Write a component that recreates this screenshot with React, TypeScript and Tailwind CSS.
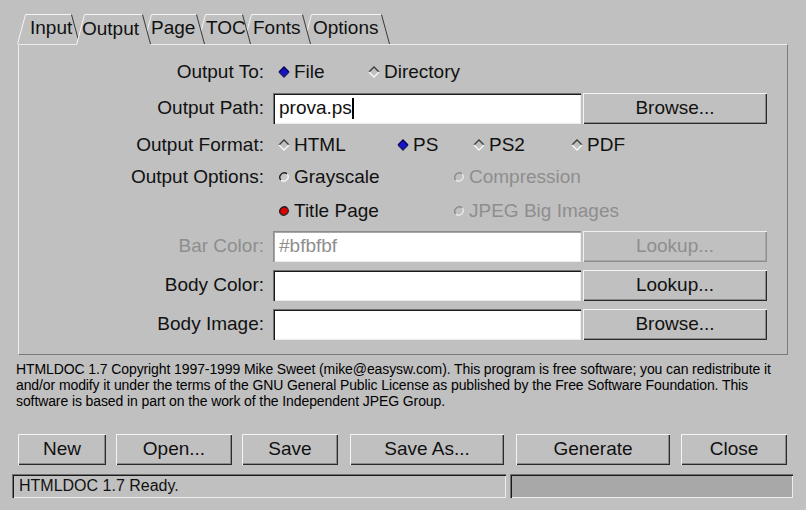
import React from "react";

const upBox =
  "shadow-[inset_1px_1px_0_#f4f4f4,inset_-1px_-1px_0_#2a2a2a,inset_-2px_-2px_0_#8a8a8a]";
const upBoxOff =
  "shadow-[inset_1px_1px_0_#f0f0f0,inset_-1px_-1px_0_#8c8c8c,inset_-2px_-2px_0_#a8a8a8]";
const downBox =
  "shadow-[inset_1px_1px_0_#707070,inset_2px_2px_0_#1a1a1a,inset_-1px_-1px_0_#ececec]";
const downBoxOff =
  "shadow-[inset_1px_1px_0_#8c8c8c,inset_2px_2px_0_#a8a8a8,inset_-1px_-1px_0_#ececec]";

type TabProps = {
  label: string;
  w: number;
  cls: string;
  selected?: boolean;
};

const Tab = ({ label, w, cls, selected }: TabProps) => {
  const h = selected ? 31 : 30;
  const s = 8;
  return (
    <div className={`relative flex items-center ${cls} ${selected ? "h-[31px]" : "h-[30px]"}`}>
      <svg className="absolute inset-0" width={w} height={h} viewBox={`0 0 ${w} ${h}`}>
        <polygon points={`0,${h} ${s},0 ${w - s},0 ${w},${h}`} fill="#c0c0c0" />
        <polyline
          points={`0.5,${h} ${s + 0.5},0.5 ${w - s - 0.5},0.5`}
          fill="none"
          stroke="#f4f4f4"
          strokeWidth="1"
        />
        <line x1={w - s - 0.5} y1={0.5} x2={w - 0.5} y2={selected ? 30 : h} stroke="#3a3a3a" strokeWidth="1" />
      </svg>
      <span className="relative pb-[1px]">{label}</span>
    </div>
  );
};

const Diamond = ({ on }: { on?: boolean }) => (
  <svg width="12" height="12" viewBox="0 0 12 12" className="shrink-0">
    <polygon points="6,1 11,6 6,11 1,6" fill={on ? "#1414c8" : "#c0c0c0"} />
    <polyline points="1,6 6,1 11,6" fill="none" stroke={on ? "#000050" : "#3a3a3a"} strokeWidth="1.3" />
    <polyline points="1,6 6,11 11,6" fill="none" stroke={on ? "#202060" : "#f8f8f8"} strokeWidth="1.3" />
  </svg>
);

const Round = ({ on, off }: { on?: boolean; off?: boolean }) => (
  <svg width="12" height="12" viewBox="0 0 12 12" className="shrink-0">
    <circle cx="6" cy="6" r="4.3" fill={on ? "#e00000" : off ? "#c0c0c0" : "#c8c8c8"} />
    <path d="M2.9 9.1 A4.4 4.4 0 0 1 9.1 2.9" fill="none" stroke={off ? "#8c8c8c" : "#202020"} strokeWidth="1.4" />
    <path d="M9.1 2.9 A4.4 4.4 0 0 1 2.9 9.1" fill="none" stroke={on ? "#303030" : off ? "#e8e8e8" : "#f4f4f4"} strokeWidth="1.4" />
  </svg>
);

const Radio = ({
  label,
  kind,
  on,
  off,
  cls,
}: {
  label: string;
  kind: "d" | "r";
  on?: boolean;
  off?: boolean;
  cls?: string;
}) => (
  <div className={`flex items-center gap-[4px] ${cls ?? ""} ${off ? "text-[#8e8e8e]" : ""}`}>
    {kind === "d" ? <Diamond on={on} /> : <Round on={on} off={off} />}
    <span>{label}</span>
  </div>
);

const Label = ({ text, off }: { text?: string; off?: boolean }) => (
  <div className={`w-[246px] shrink-0 text-right pr-[1px] ${off ? "text-[#8e8e8e]" : ""}`}>{text}</div>
);

const Field = ({ value, cursor, off }: { value?: string; cursor?: boolean; off?: boolean }) => (
  <div
    className={`w-[308px] h-[31px] bg-white flex items-center pl-[6px] ${off ? `${downBoxOff} text-[#8e8e8e]` : downBox}`}
  >
    <span>{value}</span>
    {cursor && <span className="w-[2px] h-[21px] bg-black" />}
  </div>
);

const Btn = ({ label, cls, off }: { label: string; cls: string; off?: boolean }) => (
  <div
    className={`h-[31px] flex items-center justify-center ${cls} ${off ? `${upBoxOff} text-[#8e8e8e]` : upBox}`}
  >
    {label}
  </div>
);

export default function App() {
  return (
    <div className="w-[806px] h-[510px] bg-[#c0c0c0] text-[#111] font-['Liberation_Sans',Arial,sans-serif] text-[19px] overflow-hidden">
      {/* tabs */}
      <div className="relative z-10 flex items-start h-[31px] mt-[14px] pl-[17px]">
        <Tab label="Input" w={63} cls="w-[63px] z-[1] pl-[13px]" />
        <Tab label="Output" w={75} cls="w-[75px] -ml-[4px] z-[10] pl-[6px]" selected />
        <Tab label="Page" w={62} cls="w-[62px] -ml-[8px] z-[6] pl-[8px]" />
        <Tab label="TOC" w={54} cls="w-[54px] -ml-[8px] z-[5] pl-[9px]" />
        <Tab label="Fonts" w={68} cls="w-[68px] -ml-[8px] z-[4] pl-[10px]" />
        <Tab label="Options" w={87} cls="w-[87px] -ml-[8px] z-[3] pl-[10px]" />
      </div>

      {/* panel */}
      <div className="-mt-[1px] ml-[18px] w-[770px] h-[311px] border border-t-[#ececec] border-l-[#ececec] border-r-[#7a7a7a] border-b-[#7a7a7a] pt-[12px] flex flex-col">
        <div className="flex items-center h-[30px]">
          <Label text="Output To:" />
          <div className="flex ml-[13px]">
            <Radio kind="d" label="File" on cls="w-[90px]" />
            <Radio kind="d" label="Directory" />
          </div>
        </div>
        <div className="flex items-center h-[31px] mt-[6px]">
          <Label text="Output Path:" />
          <div className="ml-[8px] flex gap-[2px]">
            <Field value="prova.ps" cursor />
            <Btn label="Browse..." cls="w-[184px]" />
          </div>
        </div>
        <div className="flex items-center h-[30px] mt-[6px]">
          <Label text="Output Format:" />
          <div className="flex ml-[13px]">
            <Radio kind="d" label="HTML" cls="w-[119px]" />
            <Radio kind="d" label="PS" on cls="w-[76px]" />
            <Radio kind="d" label="PS2" cls="w-[98px]" />
            <Radio kind="d" label="PDF" />
          </div>
        </div>
        <div className="flex items-center h-[30px] mt-[2px]">
          <Label text="Output Options:" />
          <div className="flex ml-[13px]">
            <Radio kind="r" label="Grayscale" cls="w-[175px]" />
            <Radio kind="r" label="Compression" off />
          </div>
        </div>
        <div className="flex items-center h-[30px] mt-[4px]">
          <Label />
          <div className="flex ml-[13px]">
            <Radio kind="r" label="Title Page" on cls="w-[175px]" />
            <Radio kind="r" label="JPEG Big Images" off />
          </div>
        </div>
        <div className="flex items-center h-[31px] mt-[5px]">
          <Label text="Bar Color:" off />
          <div className="ml-[8px] flex gap-[2px]">
            <Field value="#bfbfbf" off />
            <Btn label="Lookup..." cls="w-[184px]" off />
          </div>
        </div>
        <div className="flex items-center h-[31px] mt-[8px]">
          <Label text="Body Color:" />
          <div className="ml-[8px] flex gap-[2px]">
            <Field />
            <Btn label="Lookup..." cls="w-[184px]" />
          </div>
        </div>
        <div className="flex items-center h-[31px] mt-[8px]">
          <Label text="Body Image:" />
          <div className="ml-[8px] flex gap-[2px]">
            <Field />
            <Btn label="Browse..." cls="w-[184px]" />
          </div>
        </div>
      </div>

      {/* copyright */}
      <div className="mt-[6px] pl-[16px] text-[14px] leading-[16px] tracking-[-0.1px] whitespace-nowrap text-black">
        HTMLDOC 1.7 Copyright 1997-1999 Mike Sweet (mike@easysw.com). This program is free software; you can
        redistribute it
        <br />
        and/or modify it under the terms of the GNU General Public License as published by the Free Software
        Foundation. This
        <br />
        software is based in part on the work of the Independent JPEG Group.
      </div>

      {/* buttons */}
      <div className="flex mt-[25px] pl-[18px]">
        <Btn label="New" cls="w-[88px]" />
        <Btn label="Open..." cls="w-[116px] ml-[10px]" />
        <Btn label="Save" cls="w-[96px] ml-[10px]" />
        <Btn label="Save As..." cls="w-[154px] ml-[12px]" />
        <Btn label="Generate" cls="w-[154px] ml-[12px]" />
        <Btn label="Close" cls="w-[106px] ml-[11px]" />
      </div>

      {/* status */}
      <div className="flex mt-[9px] pl-[12px] gap-[4px] text-[16px]">
        <div className={`w-[494px] h-[24px] flex items-center pl-[7px] ${downBox}`}>HTMLDOC 1.7 Ready.</div>
        <div className={`w-[283px] h-[24px] bg-[#a8a8a8] ${downBox}`} />
      </div>
    </div>
  );
}
